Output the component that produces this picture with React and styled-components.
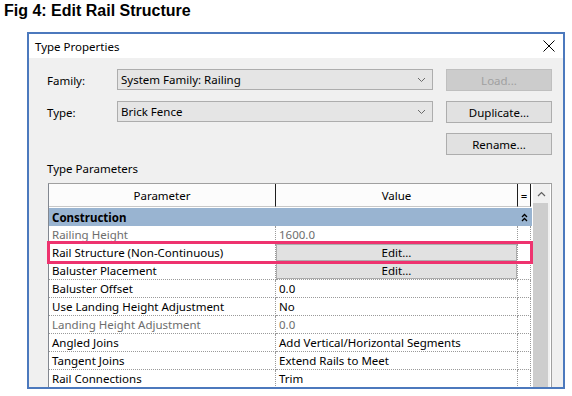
import React from "react";
import styled, { createGlobalStyle } from "styled-components";

const GlobalStyle = createGlobalStyle`
  body {
    margin: 0;
    background: #fff;
    font-family: "Noto Sans", "Open Sans", sans-serif;
    color: #000;
  }
`;

const Page = styled.div`
  padding: 2px 0 0 4px;
`;

const Caption = styled.h1`
  margin: 0;
  font: bold 16px/18px "Liberation Sans", Arial, sans-serif;
`;

const Dialog = styled.div`
  margin: 12px 0 0 23px;
  width: 538px;
  height: 357px;
  box-sizing: border-box;
  border: 2px solid #4c79bd;
  background: #f0f0f0;
  overflow: hidden;
  display: flex;
  flex-direction: column;
`;

const TitleBar = styled.div`
  height: 24px;
  flex: none;
  background: #fff;
  display: flex;
  align-items: center;
  justify-content: space-between;
  padding: 0 8px 0 6px;
  font-size: 11.5px;
`;

const Body = styled.div`
  padding: 11px 11px 0 18px;
  font-size: 11.5px;
`;

const FormGrid = styled.div`
  display: grid;
  grid-template-columns: 70px 316px 1fr;
  grid-auto-rows: 22px;
  row-gap: 10px;
`;

const Label = styled.span`
  align-self: center;
`;

const Combo = styled.div`
  height: 21px;
  box-sizing: border-box;
  border: 1px solid #adadad;
  background: #e5e5e5;
  display: flex;
  align-items: center;
  justify-content: space-between;
  padding: 0 6px 0 3px;
`;

const Button = styled.div`
  grid-column: 3;
  justify-self: end;
  width: 106px;
  height: 22px;
  box-sizing: border-box;
  border: 1px solid ${(p) => (p.disabled ? "#bfbfbf" : "#adadad")};
  background: ${(p) => (p.disabled ? "#cccccc" : "#e1e1e1")};
  color: ${(p) => (p.disabled ? "#a0a0a0" : "#000")};
  display: flex;
  align-items: center;
  justify-content: center;
`;

const SectionLabel = styled.div`
  margin: 6px 0 6px 0;
  line-height: 16px;
`;

const Table = styled.div`
  margin-left: 1px;
  width: 502px;
  display: flex;
  border: 1px solid #a0a0a0;
  border-left-color: #828790;
  background: #fff;
`;

const Grid = styled.div`
  width: 483px;
  flex: none;
`;

const Row = styled.div`
  position: relative;
  display: grid;
  grid-template-columns: 227px 242px 13px;
  height: ${(p) => p.h || 18}px;
  background: ${(p) => p.bg || "#fff"};
`;

const HeadCell = styled.div`
  display: flex;
  align-items: center;
  justify-content: center;
  border-right: 1px solid #1e1e1e;
  border-bottom: 1px solid #c8c8c8;
  background: #fcfcfc;
  margin-bottom: 1px;
`;

const GroupTitle = styled.div`
  grid-column: 1 / 3;
  font-weight: bold;
  padding-left: 3px;
  display: flex;
  align-items: center;
`;

const Cell = styled.div`
  box-sizing: border-box;
  border-right: 1px dotted #9a9a9a;
  border-bottom: 1px dotted #9a9a9a;
  padding-left: ${(p) => (p.$button ? 0 : 3)}px;
  color: ${(p) => (p.$muted ? "#6d6d6d" : "#000")};
  display: flex;
  align-items: center;
  white-space: nowrap;
  overflow: hidden;
  font-size: 11.5px;
`;

const CellButton = styled.div`
  flex: 1;
  height: 100%;
  box-sizing: border-box;
  border: 1px solid #adadad;
  background: #e1e1e1;
  display: flex;
  align-items: center;
  justify-content: center;
`;

const Center = styled.div`
  display: flex;
  align-items: center;
  justify-content: center;
`;

const Highlight = styled.div`
  position: absolute;
  inset: -3px -1px -2px -2px;
  border: 3px solid #ee336f;
  pointer-events: none;
  z-index: 1;
`;

const ScrollBar = styled.div`
  width: 17px;
  margin-left: 1px;
  background: #f0f0f0;
  display: flex;
  flex-direction: column;
`;

const ScrollArrow = styled.div`
  height: 19px;
  display: flex;
  align-items: center;
  justify-content: center;
`;

const Thumb = styled.div`
  flex: 1;
  margin: 0 2px 0 0;
  background: #cdcdcd;
`;

const Chevron = () => (
  <svg width="9" height="6" viewBox="0 0 9 6">
    <path d="M1 1 L4.5 4.5 L8 1" fill="none" stroke="#6a6a6a" strokeWidth="1" />
  </svg>
);

const CloseIcon = () => (
  <svg width="12" height="12" viewBox="0 0 12 12">
    <path d="M0.5 0.5 L11.5 11.5 M11.5 0.5 L0.5 11.5" stroke="#000" strokeWidth="1" />
  </svg>
);

const Collapse = () => (
  <svg width="7" height="9" viewBox="0 0 7 9">
    <path d="M1 4 L3.5 1.5 L6 4 M1 8 L3.5 5.5 L6 8" fill="none" stroke="#000" strokeWidth="1.3" />
  </svg>
);

const UpArrow = () => (
  <svg width="9" height="6" viewBox="0 0 9 6">
    <path d="M1 5 L4.5 1.5 L8 5" fill="none" stroke="#606060" strokeWidth="1.2" />
  </svg>
);

const params = [
  { name: "Railing Height", value: "1600.0", muted: true },
  { name: "Rail Structure (Non-Continuous)", value: "Edit...", button: true, marked: true },
  { name: "Baluster Placement", value: "Edit...", button: true },
  { name: "Baluster Offset", value: "0.0" },
  { name: "Use Landing Height Adjustment", value: "No" },
  { name: "Landing Height Adjustment", value: "0.0", muted: true },
  { name: "Angled Joins", value: "Add Vertical/Horizontal Segments" },
  { name: "Tangent Joins", value: "Extend Rails to Meet" },
  { name: "Rail Connections", value: "Trim" },
];

export default function App() {
  return (
    <Page>
      <GlobalStyle />
      <Caption>Fig 4: Edit Rail Structure</Caption>
      <Dialog>
        <TitleBar>
          <span>Type Properties</span>
          <CloseIcon />
        </TitleBar>
        <Body>
          <FormGrid>
            <Label>Family:</Label>
            <Combo>
              System Family: Railing
              <Chevron />
            </Combo>
            <Button disabled>Load...</Button>
            <Label>Type:</Label>
            <Combo>
              Brick Fence
              <Chevron />
            </Combo>
            <Button>Duplicate...</Button>
            <Button>Rename...</Button>
          </FormGrid>
          <SectionLabel>Type Parameters</SectionLabel>
          <Table>
            <Grid>
              <Row h={24}>
                <HeadCell>Parameter</HeadCell>
                <HeadCell>Value</HeadCell>
                <HeadCell>=</HeadCell>
              </Row>
              <Row bg="#99b4d1">
                <GroupTitle>Construction</GroupTitle>
                <Center>
                  <Collapse />
                </Center>
              </Row>
              {params.map((p) => (
                <Row key={p.name}>
                  <Cell $muted={p.muted}>{p.name}</Cell>
                  <Cell $muted={p.muted} $button={p.button}>
                    {p.button ? <CellButton>{p.value}</CellButton> : p.value}
                  </Cell>
                  <Cell />
                  {p.marked && <Highlight />}
                </Row>
              ))}
            </Grid>
            <ScrollBar>
              <ScrollArrow>
                <UpArrow />
              </ScrollArrow>
              <Thumb />
            </ScrollBar>
          </Table>
        </Body>
      </Dialog>
    </Page>
  );
}
